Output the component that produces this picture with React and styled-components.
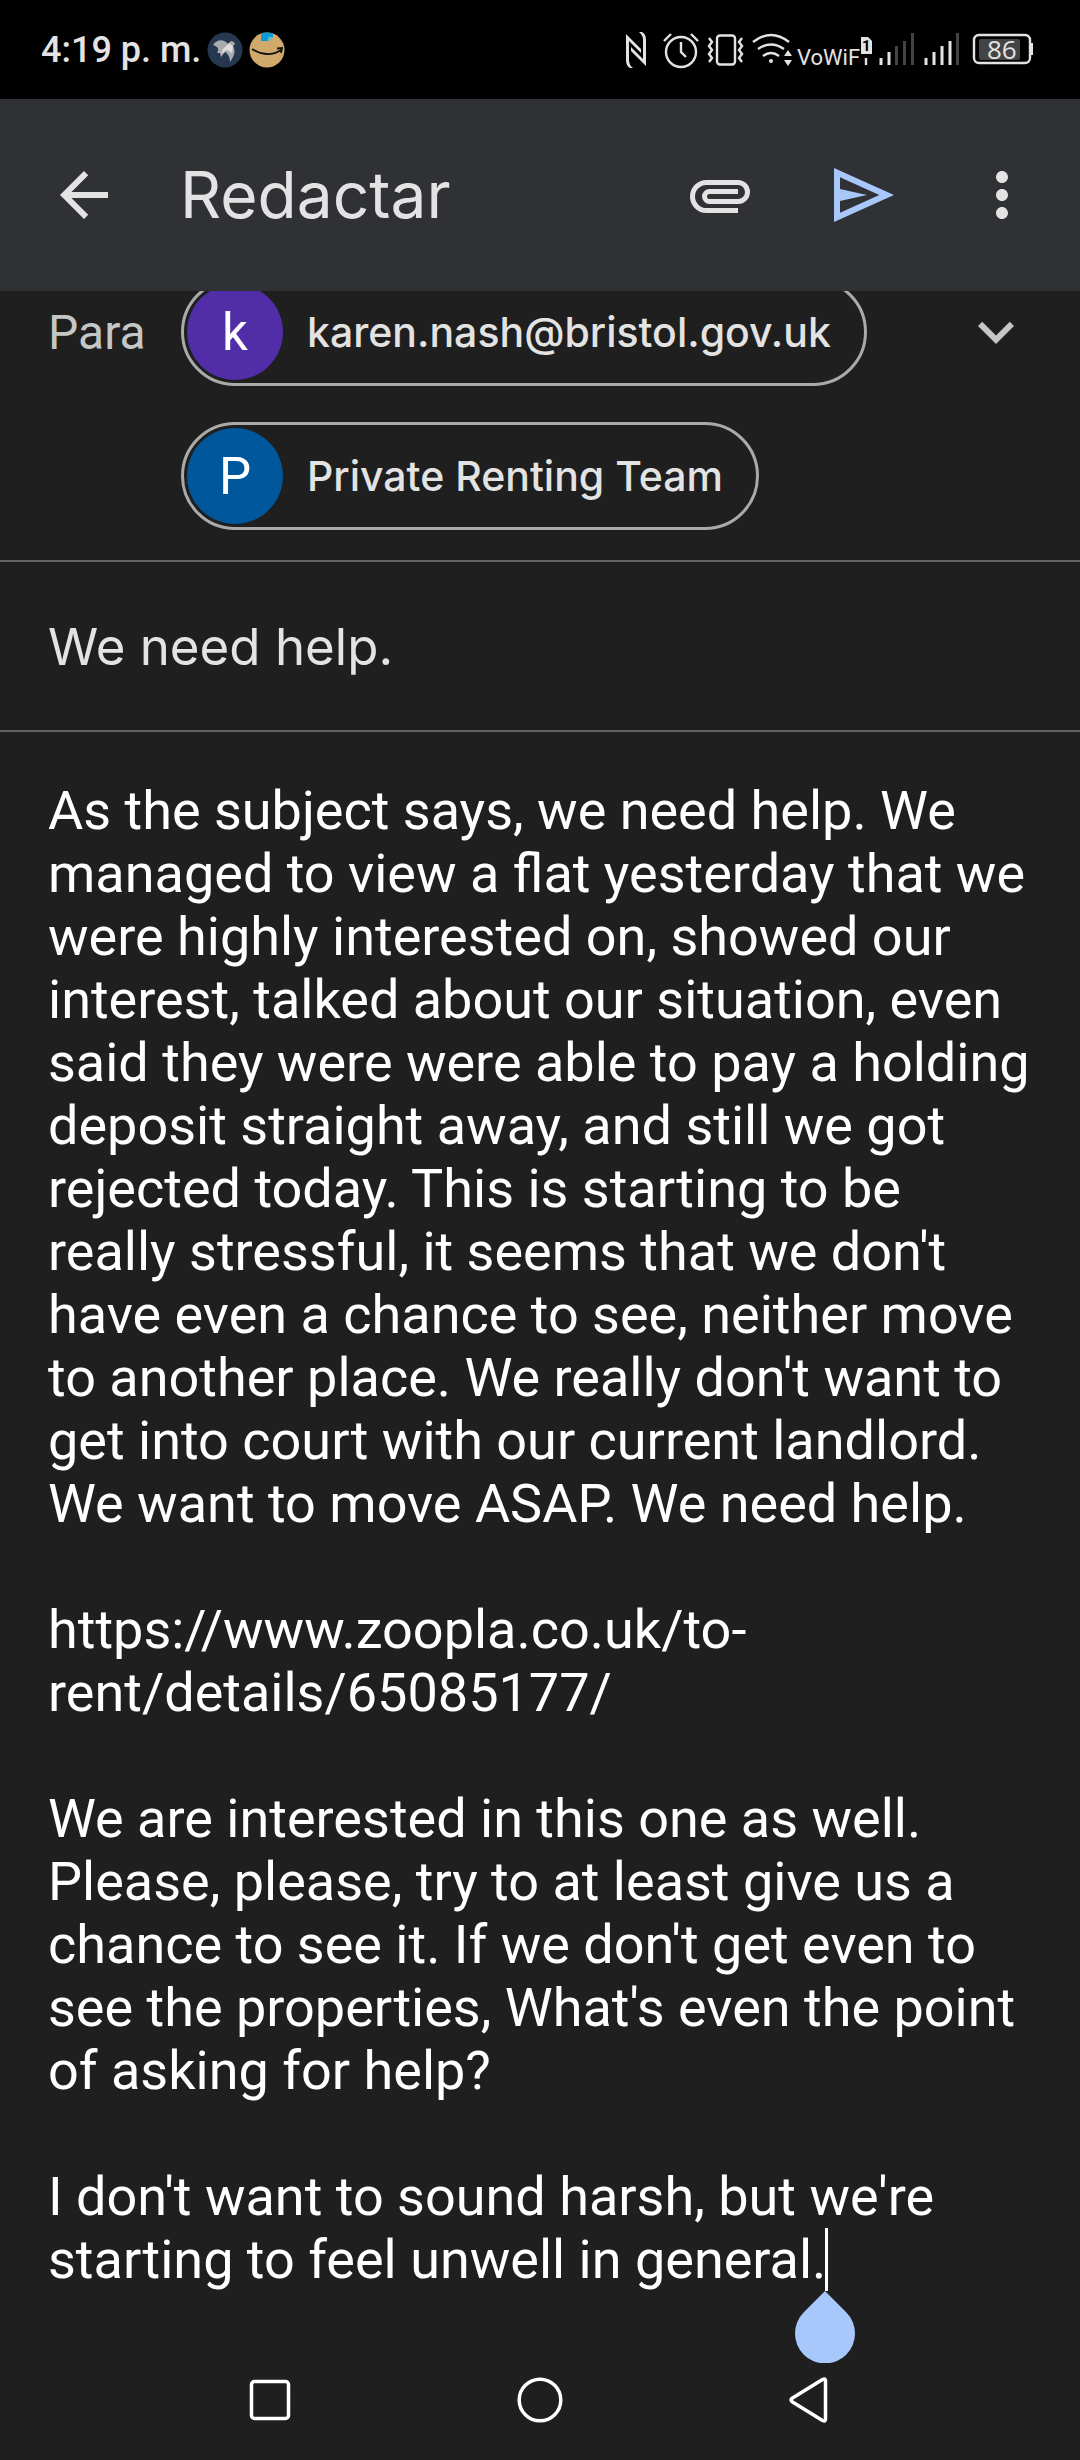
import styled, { createGlobalStyle } from "styled-components";
import { MdArrowBack, MdExpandMore, MdMoreVert } from "react-icons/md";

const GlobalStyle = createGlobalStyle`
  * {
    box-sizing: border-box;
  }

  body {
    margin: 0;
    background: #1f1f1f;
    color: #e3e3e3;
    font-family: Roboto, "Liberation Sans", sans-serif;
  }

  button {
    padding: 0;
    border: 0;
    background: none;
    color: inherit;
    cursor: pointer;
  }

  svg {
    display: block;
  }
`;

const Page = styled.div`
  display: flex;
  flex-direction: column;
  min-height: 100vh;
`;

const StatusBar = styled.div`
  display: flex;
  align-items: center;
  justify-content: space-between;
  height: 99px;
  padding: 0 47px 0 41px;
  background: #000;
`;

const StatusGroup = styled.div`
  display: flex;
  align-items: center;
  gap: 6px;
`;

const Clock = styled.time`
  font-size: 36px;
  font-weight: 500;
  line-height: 42px;
`;

const Toolbar = styled.header`
  position: sticky;
  top: 0;
  z-index: 1;
  display: flex;
  align-items: center;
  height: 192px;
  padding: 0 12px 0 48px;
  background: #303135;
`;

const Title = styled.h1`
  flex: 1;
  margin: 0 0 0 60px;
  font-family: Inter, Roboto, sans-serif;
  font-size: 64px;
  font-weight: 400;
  line-height: 78px;
`;

const IconButton = styled.button`
  display: grid;
  place-items: center;
  width: ${({ $width }) => $width || 72}px;
  height: 72px;
  color: ${({ $color }) => $color || "#e3e3e3"};
`;

const Recipients = styled.section`
  display: flex;
  align-items: flex-start;
  margin-top: -13px;
  padding: 0 48px 30px;
  border-bottom: 2px solid #5f6368;
`;

const FieldName = styled.h2`
  width: 133px;
  margin: 0;
  color: #c4c7c5;
  font-size: 48px;
  font-weight: 400;
  line-height: 110px;
`;

const ChipList = styled.ul`
  flex: 1;
  display: flex;
  flex-direction: column;
  align-items: flex-start;
  gap: 36px;
  margin: 0;
  padding: 0;
  list-style: none;
`;

const Chip = styled.li`
  display: flex;
  align-items: center;
  gap: 24px;
  height: 108px;
  padding: 0 33px 0 3px;
  border: 3px solid #a9abaa;
  border-radius: 54px;
  font-family: Inter, Roboto, sans-serif;
  font-size: 41px;
  font-weight: 500;
`;

const Avatar = styled.span`
  display: grid;
  place-items: center;
  width: 96px;
  height: 96px;
  border-radius: 50%;
  background: ${({ $color }) => $color};
  color: #fff;
  font-family: Roboto, sans-serif;
  font-size: 51px;
  font-weight: 400;
`;

const ExpandButton = styled(IconButton)`
  height: 108px;
  color: #c4c7c5;
`;

const Subject = styled.input`
  width: 100%;
  height: 170px;
  padding: 0 48px;
  border: 0;
  border-bottom: 2px solid #5f6368;
  outline: 0;
  background: none;
  color: #e3e3e3;
  font-family: Inter, Roboto, sans-serif;
  font-size: 51px;
`;

const Editor = styled.div`
  position: relative;
  margin: 47px 48px 0;
`;

const Message = styled.textarea`
  display: block;
  width: 100%;
  padding: 0;
  border: 0;
  outline: 0;
  resize: none;
  overflow: hidden;
  background: none;
  color: #fff;
  font-family: Roboto, sans-serif;
  font-size: 54px;
  line-height: 63px;
`;

const Caret = styled.span`
  position: absolute;
  bottom: 0;
  left: 777px;
  width: 3px;
  height: 63px;
  background: #fff;
`;

const Handle = styled.svg`
  position: absolute;
  top: 100%;
  left: 747px;
`;

const SystemNav = styled.nav`
  display: grid;
  grid-template-columns: repeat(3, 1fr);
  justify-items: center;
  height: 120px;
  margin-top: auto;
  padding: 0 12.5%;
`;

const SystemButton = styled.button`
  display: grid;
  place-items: center;
  width: 120px;
  height: 120px;
`;

const recipients = [
  { initial: "k", name: "karen.nash@bristol.gov.uk", color: "#512da8" },
  { initial: "P", name: "Private Renting Team", color: "#01579b" },
];

const message = `As the subject says, we need help. We managed to view a flat yesterday that we were highly interested on, showed our interest, talked about our situation, even said they were were able to pay a holding deposit straight away, and still we got rejected today. This is starting to be really stressful, it seems that we don't have even a chance to see, neither move to another place. We really don't want to get into court with our current landlord. We want to move ASAP. We need help.

https://www.zoopla.co.uk/to-rent/details/65085177/

We are interested in this one as well. Please, please, try to at least give us a chance to see it. If we don't get even to see the properties, What's even the point of asking for help?

I don't want to sound harsh, but we're starting to feel unwell in general.`;

function BirdIcon() {
  return (
    <svg width="36" height="36" viewBox="0 0 36 36">
      <circle cx="18" cy="18" r="17.5" fill="#26384f" />
      <path d="M6 13c4-6 11-6 15-1l3-3 3 1 1 2-2 2c3 5 1 11-3 16 0-5-2-8-5-10l-4 5-1-4-3 0c2-3 2-6-4-8z" fill="#a9abad" />
      <path d="M22 11l-6 6-2 5 6-4 5 3 1-7z" fill="#dcdcdc" />
    </svg>
  );
}

function ParcelIcon() {
  return (
    <svg width="36" height="36" viewBox="0 0 36 36">
      <circle cx="18" cy="18" r="17.5" fill="#d0a96b" />
      <path d="M12 1.600Q18-.4 24 1.600V5l-5 4h-7z" fill="#0f9bd1" />
      <path d="M19 9V5h5z" fill="#4fc0e8" />
      <path d="M3 17c9 6 20 7 29 1M28 16.500l5-.5-1 5" fill="none" stroke="#111" strokeWidth="1.800" />
    </svg>
  );
}

function StatusIcons() {
  return (
    <svg width="410" height="40" viewBox="623 30 410 40" fill="none" stroke="#e3e3e3" strokeWidth="2.400" role="img" aria-label="86">
      <g fill="#e3e3e3" stroke="none">
        <path d="M626 34l15 15v4l-12-12v19q0 5 4 8h-3q-4-2-4-8z" />
        <path d="M646 66l-15-15v-4l12 12v-19q0-5-4-8h3q4 2 4 8z" />
        <path d="M788 50l4 6h-8zM788 66l4-6h-8z" />
        <circle cx="771" cy="61" r="2" />
      </g>
      <circle cx="681" cy="52" r="15" />
      <path d="M681 42v10l5 5M664 41l7-7M698 41l-7-7" />
      <rect x="717" y="35.500" width="18" height="29" rx="3" />
      <path d="M709 38l3 4-3 4 3 4-3 4 3 4-3 4M742 38l-3 4 3 4-3 4 3 4-3 4 3 4" />
      <path d="M753 42q18-14 36 0M758 49q13-9 26 0M763 56q8-6 16 0" />
      <text x="797" y="65" fill="#e3e3e3" stroke="none" fontFamily="Roboto" fontSize="22">VoWiF</text>
      <path d="M866 58v7" />
      <path d="M861 37h7l4 4v13h-11z" fill="#e3e3e3" stroke="none" />
      <text x="862" y="51" fill="#000" stroke="none" fontFamily="Roboto" fontSize="15" fontWeight="700">1</text>
      <g strokeWidth="3">
        <path d="M881 58v7M889 52v13M926 58v7M934 52v13M942 46v19M950 41v24" />
        <path d="M896.500 46v19M904.500 41v24M912.500 33v32M957.500 33v32" stroke="#444" />
      </g>
      <rect x="974" y="35" width="56" height="28" rx="5" />
      <rect x="979" y="39" width="41" height="21" rx="2" fill="#444" stroke="none" />
      <path d="M1030 43h3v12h-3z" fill="#e3e3e3" stroke="none" />
      <text x="987" y="59" fill="#e3e3e3" stroke="none" fontFamily="Open Sans" fontSize="26">86</text>
    </svg>
  );
}

function AttachIcon() {
  return (
    <svg width="72" height="72" viewBox="0 0 72 72" fill="none" stroke="currentColor" strokeWidth="5">
      <path d="M54 51.500H22.500a14 14 0 0 1 0-28H54a9.500 9.500 0 0 1 0 19H25.500a5 5 0 0 1 0-10H54" />
    </svg>
  );
}

function SendIcon() {
  return (
    <svg width="72" height="72" viewBox="0 0 72 72" fill="currentColor">
      <path fillRule="evenodd" d="M6 9l60 27L6 63zM12 18.300v35.400L51.300 36z" />
      <path d="M12 30l27 6-27 6z" />
    </svg>
  );
}

function App() {
  return (
    <Page>
      <GlobalStyle />
      <StatusBar>
        <StatusGroup>
          <Clock>4:19 p. m.</Clock>
          <BirdIcon />
          <ParcelIcon />
        </StatusGroup>
        <StatusIcons />
      </StatusBar>
      <Toolbar>
        <IconButton aria-label="Atrás">
          <MdArrowBack size={72} />
        </IconButton>
        <Title>Redactar</Title>
        <IconButton $width={144} aria-label="Adjuntar archivo">
          <AttachIcon />
        </IconButton>
        <IconButton $width={144} $color="#a8c7fa" aria-label="Enviar">
          <SendIcon />
        </IconButton>
        <IconButton $width={132} aria-label="Más opciones">
          <MdMoreVert size={72} />
        </IconButton>
      </Toolbar>
      <main>
        <Recipients>
          <FieldName>Para</FieldName>
          <ChipList>
            {recipients.map(({ initial, name, color }) => (
              <Chip key={name}>
                <Avatar $color={color}>{initial}</Avatar>
                {name}
              </Chip>
            ))}
          </ChipList>
          <ExpandButton aria-label="Agregar Cc/Cco">
            <MdExpandMore size={72} />
          </ExpandButton>
        </Recipients>
        <Subject aria-label="Asunto" defaultValue="We need help." />
        <Editor>
          <Message rows={24} aria-label="Redactar correo" spellCheck={false} defaultValue={message} />
          <Caret />
          <Handle width="60" height="72" viewBox="0 0 60 72" fill="#a8c7fa">
            <path d="M30 0l21.200 21.200a30 30 0 1 1-42.400 0z" />
          </Handle>
        </Editor>
      </main>
      <SystemNav>
        <SystemButton aria-label="Recientes">
          <svg width="48" height="48" viewBox="0 0 48 48" fill="none" stroke="#fff" strokeWidth="3.500">
            <rect x="5.500" y="5.500" width="37" height="37" rx="3" />
          </svg>
        </SystemButton>
        <SystemButton aria-label="Inicio">
          <svg width="48" height="48" viewBox="0 0 48 48" fill="none" stroke="#fff" strokeWidth="3.500">
            <circle cx="24" cy="24" r="20.800" />
          </svg>
        </SystemButton>
        <SystemButton aria-label="Volver">
          <svg width="48" height="48" viewBox="0 0 48 48" fill="none" stroke="#fff" strokeWidth="3.500" strokeLinejoin="round">
            <path d="M36.500 3.500q3-1.500 3 1.500v38q0 3-3 1.500L6.500 26q-3-2 0-4z" />
          </svg>
        </SystemButton>
      </SystemNav>
    </Page>
  );
}

export default App;
